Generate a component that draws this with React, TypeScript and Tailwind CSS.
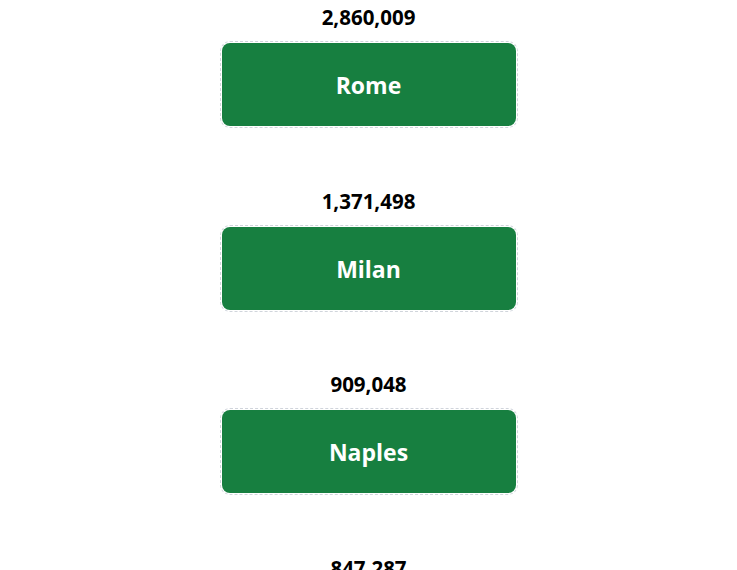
const cities = [
  { name: 'Rome', population: '2,860,009' },
  { name: 'Milan', population: '1,371,498' },
  { name: 'Naples', population: '909,048' },
  { name: 'Turin', population: '847,287' },
]

export default function App() {
  return (
    <div
      className="min-h-screen bg-white flex flex-col items-center pt-[3px]"
      style={{ fontFamily: '"Open Sans", "Noto Sans", sans-serif' }}
    >
      {cities.map((city) => (
        <div key={city.name} className="flex flex-col items-center mb-[58.5px]">
          <p className="text-[20.5px] leading-[28px] font-bold text-black">
            {city.population}
          </p>
          <div className="mt-[10px] w-[298px] rounded-[10px] border border-dashed border-gray-300 p-px">
            <div className="h-[83px] rounded-lg bg-[#177f40] flex items-center justify-center pt-[2px]">
              <span className="text-[23px] font-bold text-white">{city.name}</span>
            </div>
          </div>
        </div>
      ))}
    </div>
  )
}
